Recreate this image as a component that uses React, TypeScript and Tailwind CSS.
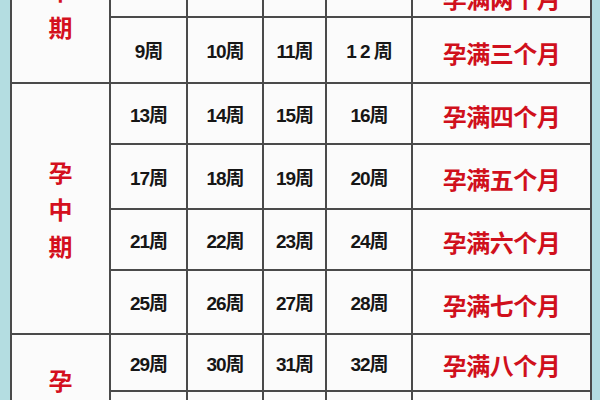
const groups = [
  {
    name: "孕早期",
    extra: "pt-[2px]",
    rows: [
      { weeks: ["1周", "2周", "3周", "4周"], month: "孕满一个月", h: "h-[62px]", low: false },
      { weeks: ["5周", "6周", "7周", "8周"], month: "孕满两个月", h: "h-[62px]", low: true },
      { weeks: ["9周", "10周", "11周", "1 2 周"], month: "孕满三个月", h: "h-[66px]", low: false },
    ],
  },
  {
    name: "孕中期",
    extra: "",
    rows: [
      { weeks: ["13周", "14周", "15周", "16周"], month: "孕满四个月", h: "h-[61px]", low: false },
      { weeks: ["17周", "18周", "19周", "20周"], month: "孕满五个月", h: "h-[65px]", low: false },
      { weeks: ["21周", "22周", "23周", "24周"], month: "孕满六个月", h: "h-[61px]", low: false },
      { weeks: ["25周", "26周", "27周", "28周"], month: "孕满七个月", h: "h-[64px]", low: false },
    ],
  },
  {
    name: "孕晚期",
    extra: "pb-[16px]",
    rows: [
      { weeks: ["29周", "30周", "31周", "32周"], month: "孕满八个月", h: "h-[57px]", low: false },
      { weeks: ["33周", "34周", "35周", "36周"], month: "孕满九个月", h: "h-[62px]", low: false },
      { weeks: ["37周", "38周", "39周", "40周"], month: "孕满十个月", h: "h-[62px]", low: false },
    ],
  },
];

export default function App() {
  return (
    <div className="w-[600px] h-[400px] overflow-hidden bg-[#b4dde1]">
      <table className="table-fixed border-collapse w-[580px] ml-[10px] -mt-[108px] bg-[#fbfbfb] border-2 border-[#4a4a4a]">
        <colgroup>
          <col className="w-[99px]" />
          <col className="w-[77px]" />
          <col className="w-[76px]" />
          <col className="w-[63px]" />
          <col className="w-[86px]" />
          <col className="w-[179px]" />
        </colgroup>
        <tbody>
          {groups.map((group) =>
            group.rows.map((row, i) => (
              <tr key={row.month} className={row.h}>
                {i === 0 && (
                  <td
                    rowSpan={group.rows.length}
                    className="border-2 border-[#4a4a4a] text-center align-middle"
                  >
                    <div
                      className={`flex flex-col items-center leading-[37px] text-[24px] font-semibold text-[#d4101e] ${group.extra}`}
                      style={{ fontFamily: '"Noto Sans CJK SC", sans-serif' }}
                    >
                      {group.name.split("").map((ch, k) => (
                        <span key={k}>{ch}</span>
                      ))}
                    </div>
                  </td>
                )}
                {row.weeks.map((w) => (
                  <td
                    key={w}
                    className="border-2 border-[#4a4a4a] pt-[5px] text-center text-[19px] font-bold text-[#161616] tracking-[-1px]"
                    style={{ fontFamily: '"Liberation Sans Narrow", "Liberation Sans", "Noto Sans CJK SC", sans-serif' }}
                  >
                    {w}
                  </td>
                ))}
                <td
                  className={`border-2 border-[#4a4a4a] text-center text-[24px] leading-[36px] font-bold text-[#d0101c] tracking-[-0.5px] ${row.low ? "align-bottom" : "align-middle pt-[5px]"}`}
                  style={{ fontFamily: '"Noto Sans CJK SC", sans-serif' }}
                >
                  {row.month}
                </td>
              </tr>
            ))
          )}
        </tbody>
      </table>
    </div>
  );
}
